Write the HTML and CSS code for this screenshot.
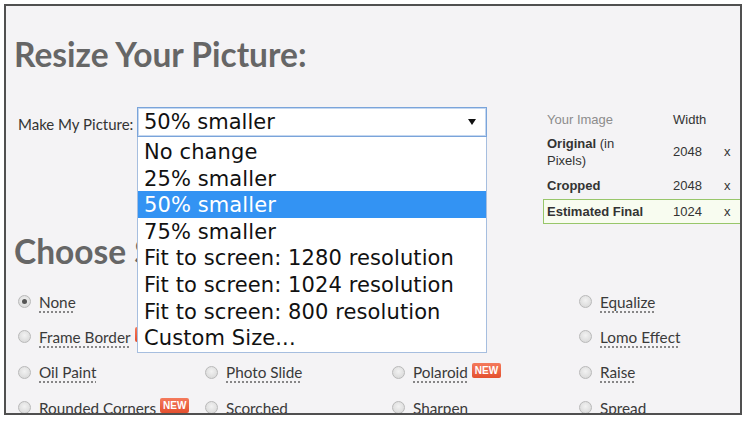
FILE: index.html
```html
<!DOCTYPE html>
<html>
<head>
  <meta charset="utf-8">
  <meta name="viewport" content="width=device-width">
  <link rel="stylesheet" href="styles.css">
  <title>Resize Your Picture</title>
</head>
<body>
  <div class="frame">
    <h1>Resize Your Picture:</h1>
    <div class="resize-row">
      <label class="make-label">Make My Picture:</label>
      <div class="select-wrap">
        <div class="select">
          <span>50% smaller</span>
          <span class="arrow"></span>
        </div>
        <ul class="options">
          <li>No change</li>
          <li>25% smaller</li>
          <li class="active">50% smaller</li>
          <li>75% smaller</li>
          <li>Fit to screen: 1280 resolution</li>
          <li>Fit to screen: 1024 resolution</li>
          <li>Fit to screen: 800 resolution</li>
          <li>Custom Size...</li>
        </ul>
      </div>
      <div class="dims">
        <div class="dim-row head">
          <span class="muted">Your Image</span>
          <span>Width</span>
          <span></span>
        </div>
        <div class="dim-row tall">
          <span><b>Original</b> (in Pixels)</span>
          <span>2048</span>
          <span>x</span>
        </div>
        <div class="dim-row">
          <span><b>Cropped</b></span>
          <span>2048</span>
          <span>x</span>
        </div>
        <div class="dim-row final">
          <span><b>Estimated Final</b></span>
          <span>1024</span>
          <span>x</span>
        </div>
      </div>
    </div>

    <h2>Choose Special Effect:</h2>
    <div class="effects">
      <label class="effect"><span class="radio checked"></span><span class="name">None</span></label>
      <span></span>
      <span></span>
      <label class="effect"><span class="radio"></span><span class="name">Equalize</span></label>

      <label class="effect"><span class="radio"></span><span class="name">Frame Border</span><span class="new">NEW</span></label>
      <span></span>
      <span></span>
      <label class="effect"><span class="radio"></span><span class="name">Lomo Effect</span></label>

      <label class="effect"><span class="radio"></span><span class="name">Oil Paint</span></label>
      <label class="effect"><span class="radio"></span><span class="name">Photo Slide</span></label>
      <label class="effect"><span class="radio"></span><span class="name">Polaroid</span><span class="new">NEW</span></label>
      <label class="effect"><span class="radio"></span><span class="name">Raise</span></label>

      <label class="effect"><span class="radio"></span><span class="name">Rounded Corners</span><span class="new">NEW</span></label>
      <label class="effect"><span class="radio"></span><span class="name">Scorched</span></label>
      <label class="effect"><span class="radio"></span><span class="name">Sharpen</span></label>
      <label class="effect"><span class="radio"></span><span class="name">Spread</span></label>
    </div>
  </div>
</body>
</html>
```

FILE: styles.css
```css
body {
  margin: 0;
  background-color: #ffffff;
  font-family: Lato, "Open Sans", sans-serif;
}
.frame {
  box-sizing: border-box;
  width: 738px;
  height: 411px;
  margin: 4px 0 0 4px;
  border: 2px solid #505050;
  background-color: #f4f3f5;
  overflow: hidden;
}
h1, h2 {
  margin: 0;
  padding-left: 8px;
  font-size: 33.5px;
  line-height: 42px;
  font-weight: 700;
  color: #666666;
}
h1 {
  margin-top: 27px;
}
h2 {
  margin-top: 6px;
}

/* select + table */
.resize-row {
  display: flex;
  align-items: flex-start;
  margin-top: 32px;
  padding-left: 12px;
}
.make-label {
  width: 119px;
  flex: none;
  font-size: 15px;
  line-height: 30px;
  padding-top: 2px;
  color: #333333;
}
.select-wrap {
  position: relative;
  width: 350px;
  flex: none;
  font-family: "DejaVu Sans", Verdana, sans-serif;
  font-size: 21px;
}
.select {
  box-sizing: border-box;
  height: 30px;
  display: flex;
  align-items: center;
  justify-content: space-between;
  padding: 0 10px 0 6px;
  border: 1px solid #7aa4da;
  box-shadow: inset 0 0 0 1px #c4d7f0;
  background-color: #ffffff;
  color: #111111;
}
.arrow {
  width: 0;
  height: 0;
  border-left: 4px solid transparent;
  border-right: 4px solid transparent;
  border-top: 6px solid #111111;
}
.options {
  position: absolute;
  top: 30px;
  left: 0;
  right: 0;
  margin: 0;
  padding: 1px 0 1px 0;
  list-style: none;
  border: 1px solid #a6bedf;
  border-top: 0;
  background-color: #ffffff;
  color: #111111;
}
.options li {
  height: 26.6px;
  line-height: 28px;
  padding-left: 6px;
  white-space: nowrap;
  letter-spacing: 0.1px;
}
.options li.active {
  background-color: #3393f3;
  color: #ffffff;
}

.dims {
  width: 200px;
  flex: none;
  margin: 1px 0 0 56px;
  font-family: "Liberation Sans", Arial, sans-serif;
  font-size: 13px;
  color: #333333;
}
.dim-row {
  display: grid;
  grid-template-columns: 126px 51px 1fr;
  align-items: center;
  height: 27px;
  padding-left: 4px;
}
.dim-row.head {
  height: 23px;
}
.dim-row.tall {
  height: 41px;
  line-height: 17px;
}
.dim-row.tall span:first-child {
  width: 84px;
}
.dim-row.final {
  box-sizing: border-box;
  height: 25px;
  border: 1px solid #98c66a;
  background-color: #f8fcf0;
  padding-left: 3px;
}
.muted {
  color: #8c8c8c;
}

/* effects */
.effects {
  display: grid;
  grid-template-columns: repeat(4, 187px);
  grid-auto-rows: 35.3px;
  margin-top: 12px;
  padding-left: 12px;
}
.effect {
  display: flex;
  align-items: center;
  font-size: 15.3px;
  color: #3a3a3a;
}
.radio {
  box-sizing: border-box;
  width: 13px;
  height: 13px;
  margin-right: 8px;
  border: 1px solid #b9b9b9;
  border-radius: 50%;
  background: radial-gradient(circle at 50% 40%, #f2f2f2, #d4d4d4);
  display: flex;
  align-items: center;
  justify-content: center;
}
.radio.checked::after {
  content: "";
  width: 5px;
  height: 5px;
  border-radius: 50%;
  background-color: #555555;
}
.name {
  text-decoration: underline dotted #666666;
  text-underline-offset: 4px;
}
.new {
  margin: -4px 0 0 4px;
  padding: 2px 3px 1px;
  border-radius: 2px;
  background: linear-gradient(#f47a5c, #e4502f);
  color: #ffffff;
  font-family: "Liberation Sans", Arial, sans-serif;
  font-size: 10px;
  font-weight: 700;
  line-height: 12px;
}
```
